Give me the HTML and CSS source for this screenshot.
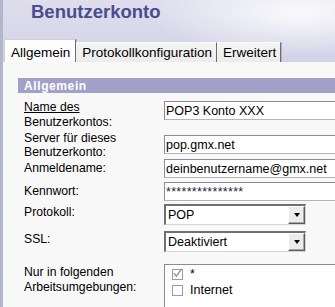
FILE: index.html
```html
<!DOCTYPE html>
<html lang="de">
<head>
    <meta charset="UTF-8">
    <meta name="viewport" content="width=device-width, initial-scale=1.0">
    <title>Benutzerkonto</title>
    <link rel="stylesheet" href="styles.css">
</head>
<body>
    <div class="window">
        <div class="header">
            <h1 class="title">Benutzerkonto</h1>
        </div>

        <div class="tabs">
            <div class="tab tab-active">Allgemein</div>
            <div class="tab tab-proto">Protokollkonfiguration</div>
            <div class="tab tab-ext">Erweitert</div>
        </div>

        <div class="panel">
            <div class="section-title">Allgemein</div>

            <div class="form">
                <div class="row row-name">
                    <div class="label"><u>Name des</u><br>Benutzerkontos:</div>
                    <div class="textbox">POP3 Konto XXX</div>
                </div>
                <div class="row row-server">
                    <div class="label">Server für dieses<br>Benutzerkonto:</div>
                    <div class="textbox">pop.gmx.net</div>
                </div>
                <div class="row row-login">
                    <div class="label">Anmeldename:</div>
                    <div class="textbox">deinbenutzername@gmx.net</div>
                </div>
                <div class="row row-pass">
                    <div class="label">Kennwort:</div>
                    <div class="textbox textbox-pass">***************</div>
                </div>
                <div class="row row-proto">
                    <div class="label">Protokoll:</div>
                    <div class="select">
                        <span class="select-value">POP</span>
                        <span class="select-btn"><span class="arrow"></span></span>
                    </div>
                </div>
                <div class="row row-ssl">
                    <div class="label">SSL:</div>
                    <div class="select">
                        <span class="select-value">Deaktiviert</span>
                        <span class="select-btn"><span class="arrow"></span></span>
                    </div>
                </div>
                <div class="row row-env">
                    <div class="label">Nur in folgenden<br>Arbeitsumgebungen:</div>
                    <div class="listbox">
                        <div class="list-item">
                            <span class="checkbox">
                                <svg width="11" height="11" viewBox="0 0 11 11">
                                    <polyline points="1.8,5.2 4.3,8.2 9.6,0.8" fill="none" stroke="#8a8a8a" stroke-width="1.2"/>
                                </svg>
                            </span>
                            <span class="item-text">*</span>
                        </div>
                        <div class="list-item">
                            <span class="checkbox"></span>
                            <span class="item-text">Internet</span>
                        </div>
                    </div>
                </div>
            </div>
        </div>
    </div>
</body>
</html>
```

FILE: styles.css
```css
* {
    margin: 0;
    padding: 0;
    box-sizing: border-box;
}
body {
    font-family: "Liberation Sans", Arial, sans-serif;
    color: #000;
    height: 307px;
    overflow: hidden;
    background:
        radial-gradient(ellipse 150px 45px at 300px 12px, rgba(255,255,255,0.85), rgba(255,255,255,0)),
        linear-gradient(to bottom, #dedeee, #d2d2e6 62px);
}
.window {
    border-left: 3px solid #b1b7ca;
    height: 307px;
    display: flex;
    flex-direction: column;
}

/* title */
.header {
    height: 39px;
    padding: 1px 0 0 28px;
}
.title {
    font-size: 18.5px;
    line-height: 22px;
    font-weight: bold;
    color: #4b4c8f;
}

/* tabs */
.tabs {
    height: 23px;
    display: flex;
    align-items: flex-end;
    padding-left: 1px;
}
.tab {
    font-size: 13.5px;
    line-height: 16px;
    height: 20px;
    padding: 2px 4px 0 6px;
    background: linear-gradient(to bottom, #f4f4f4, #ececec);
    border-top: 1px solid #fafafa;
    border-right: 1px solid #6c6c6c;
    box-shadow: 1px 0 0 #b4b4b4;
}
.tab-active {
    height: 23px;
    padding: 5px 5px 0 6px;
    background: #fdfdfd;
    border-top: 1px solid #cfcfcf;
    border-left: 1px solid #cfcfcf;
}
.tab-proto {
    padding-left: 6px;
}
.tab-ext {
    padding-right: 4px;
}

/* panel */
.panel {
    flex: 1;
    background: #f8f8f8;
    padding: 16px 0 0 15px;
    overflow: hidden;
}
.section-title {
    height: 15px;
    padding: 1px 0 0 6px;
    background-color: #a2a0c8;
    color: #fff;
    font-size: 12px;
    line-height: 14px;
    font-weight: bold;
    letter-spacing: 0.6px;
}
.form {
    margin-top: 8px;
    padding-left: 6px;
    font-size: 12.2px;
}
.row {
    display: grid;
    grid-template-columns: 140px 200px;
    align-items: start;
}
.label {
    line-height: 14px;
    margin-top: 2px;
}
.row-name { height: 34px; }
.row-name .label { margin-top: -1px; line-height: 15px; }
.row-server { height: 24px; }
.row-server .label { margin-top: -3px; line-height: 13.5px; }
.row-login { height: 23px; }
.row-pass { height: 22px; }
.row-proto { height: 27px; }
.row-proto .label { margin-top: 1px; }
.row-ssl { height: 33px; }
.row-ssl .label { margin-top: 1px; }
.row-env .label { margin-top: 1px; line-height: 15px; }

/* inputs */
.textbox {
    height: 19px;
    padding: 1px 0 0 1px;
    font-size: 12.5px;
    line-height: 16px;
    background: #fff;
    border: 1px solid #8c8c8c;
    border-bottom-color: #b4b4b4;
    white-space: nowrap;
}
.textbox-pass {
    color: #1a1a3a;
    letter-spacing: 0.3px;
}
.select {
    width: 142px;
    height: 21px;
    display: flex;
    background: #fff;
    font-size: 12.5px;
    border-top: 2px solid #6f6f6f;
    border-left: 2px solid #6f6f6f;
    border-bottom: 1px solid #d6d6d6;
    border-right: 1px solid #d6d6d6;
}
.select-value {
    flex: 1;
    padding: 1px 0 0 2px;
    line-height: 16px;
}
.select-btn {
    width: 17px;
    display: flex;
    align-items: center;
    justify-content: center;
    background: #ececec;
    border-top: 1px solid #fff;
    border-left: 1px solid #fff;
    border-right: 1px solid #5a5a5a;
    border-bottom: 1px solid #5a5a5a;
    box-shadow: inset -1px -1px 0 #a8a8a8;
}
.arrow {
    width: 0;
    height: 0;
    border-top: 4px solid #000;
    border-left: 3.5px solid transparent;
    border-right: 3.5px solid transparent;
}

/* list of environments */
.listbox {
    height: 60px;
    padding: 1px 0 0 7px;
    background: #fff;
    font-size: 12.5px;
    border-top: 1px solid #8c8c8c;
    border-left: 1px solid #8c8c8c;
}
.list-item {
    height: 16px;
    display: flex;
    align-items: center;
    line-height: 16px;
}
.checkbox {
    width: 11px;
    height: 11px;
    border: 1px solid #9a9a9a;
    background: #fff;
    position: relative;
}
.checkbox svg {
    position: absolute;
    left: -1px;
    top: -2px;
}
.item-text {
    margin-left: 7px;
}
```
